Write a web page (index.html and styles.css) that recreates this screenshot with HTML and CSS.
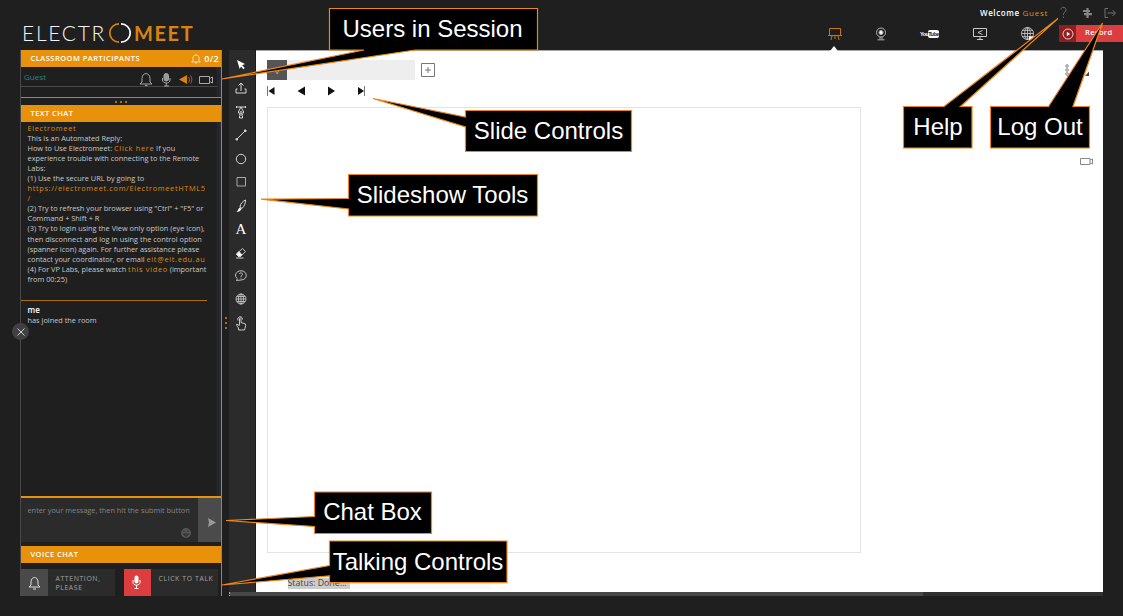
FILE: index.html
```html
<!DOCTYPE html>
<html lang="en">
<head>
<meta charset="utf-8">
<title>Electromeet</title>
<link rel="stylesheet" href="styles.css">
</head>
<body>
<div class="app">
  <header class="top">
    <div class="logo"><span class="logo-light">ELECTR</span><svg class="ring" width="22" height="22" viewBox="0 0 22 22" fill="none" stroke-width="1.7"><path d="M10 1.8A9.2 9.2 0 0 0 10 20.2" stroke="#d98210"/><path d="M12 1.8A9.2 9.2 0 0 1 12 20.2" stroke="#fff"/></svg><span class="logo-bold">MEET</span></div>
    <div class="top-right">
      <div class="account">
        <span class="welcome">Welcome <b>Guest</b></span>
        <svg width="80" height="24" viewBox="0 0 80 24" fill="none" stroke="#707070"><path d="M14 9.500C14 6.500 19 6.500 19 9.800C19 12.200 16.400 12 16.400 15M16.400 16.600V18"/><path d="M36 11H43M37 14.200H45M40.500 8V18" stroke="#858585" stroke-width="2.200"/><path d="M61 8.500H58V17.500H61M60.500 13H68M65.500 10L68.500 13L65.500 16"/></svg>
      </div>
      <nav class="modes">
        <svg width="16" height="14" viewBox="0 0 16 14" fill="none" stroke="#c87808"><path d="M2.500 1.500H13.500V8.500H2.500ZM1 8.500H15M5 9L4 13M11 9L12 13M8 9V12"/></svg>
        <svg width="12" height="14" viewBox="0 0 12 14" fill="none" stroke="#b5b5b5"><circle cx="6" cy="5.500" r="4.500"/><circle cx="6" cy="5.500" r="2" fill="#fff"/><path d="M5 10V12M7 10V12M2.500 12.800H9.500"/></svg>
        <div class="youtube"><span>You</span><b>Tube</b></div>
        <svg width="14" height="14" viewBox="0 0 14 14" fill="none" stroke="#c9c9c9"><path d="M.500 1.500H13.500V9.500H.500ZM7 10V12M4 12.500H10"/><path d="M9.500 3.500L5 5.500L9.500 7.500"/></svg>
        <svg width="14" height="14" viewBox="0 0 14 14" fill="none" stroke="#d5d5d5" stroke-width=".8"><circle cx="6.500" cy="6.500" r="6"/><ellipse cx="6.500" cy="6.500" rx="2.800" ry="6"/><path d="M.500 6.500H12.500M1.500 3.300H11.500M1.500 9.700H11.500M6.500 .500V12.500"/><path d="M8 9.500H13V11L11 13H8Z" fill="#fff" stroke="none"/></svg>
        <div class="record"><span class="record-icon"><svg width="12" height="12" viewBox="0 0 12 12" fill="none" stroke="#f0c8c8"><circle cx="6" cy="6" r="5"/><path d="M4.800 3.800L8.200 6L4.800 8.200Z" fill="#fff" stroke="none"/></svg></span><span class="record-label">Record</span></div>
      </nav>
    </div>
  </header>

  <main class="main">
    <aside class="side">
      <div class="bar"><span class="wide">CLASSROOM PARTICIPANTS</span><span class="count"><svg width="10" height="10" viewBox="0 0 15 15" fill="none" stroke="#fff"><path d="M1 12H14L12 10V6C12 0 3 0 3 6V10ZM6 13.500H9"/></svg>0/2</span></div>
      <div class="people">
        <div class="person"><span>Guest</span>
          <svg width="78" height="16" viewBox="0 0 78 16" fill="none" stroke="#a8a8a8"><path d="M1 12H13L11 10V6.500C11 0 3 0 3 6.500V10ZM6 13.500H8.500"/><rect x="25" y="1.500" width="4.500" height="7.500" rx="2.200" fill="#999"/><path d="M23.500 6V8C23.500 12 31 12 31 8V6M27.300 11V14M25 14H30"/><path d="M40 7.500L48 3V12Z" fill="#dc8206" stroke="none"/><path d="M49.500 5C51 6.500 51 9 49.500 10.500M51.500 3.500C53.300 6 53.300 9 51.500 11.500" stroke="#a96506"/><path d="M60.500 4.500H70.500V11.500H60.500ZM70.500 6.500L73.500 5V11L70.500 9.500"/></svg>
        </div>
      </div>
      <div class="dots"><i></i><i></i><i></i></div>
      <div class="bar"><span class="mid">TEXT CHAT</span></div>
      <div class="chat">
        <div class="message">
          <span class="ln"><a>Electromeet</a></span>
          <span class="ln">This is an Automated Reply:</span>
          <span class="ln">How to Use Electromeet: <a>Click here</a> If you</span>
          <span class="ln">experience trouble with connecting to the Remote</span>
          <span class="ln">Labs:</span>
          <span class="ln">(1) Use the secure URL by going to</span>
          <span class="ln"><a>https://electromeet.com/ElectromeetHTML5</a></span>
          <span class="ln"><a>/</a></span>
          <span class="ln">(2) Try to refresh your browser using "Ctrl" + "F5" or</span>
          <span class="ln">Command + Shift + R</span>
          <span class="ln">(3) Try to login using the View only option (eye icon),</span>
          <span class="ln">then disconnect and log in using the control option</span>
          <span class="ln">(spanner icon) again. For further assistance please</span>
          <span class="ln">contact your coordinator, or email <a>eit@eit.edu.au</a></span>
          <span class="ln">(4) For VP Labs, please watch <a>this video</a> (important</span>
          <span class="ln">from 00:25)</span>
        </div>
        <div class="message joined"><span class="ln"><b>me</b></span><span class="ln">has joined the room</span></div>
      </div>
      <div class="compose">
        <div class="entry"><span>enter your message, then hit the submit button</span><svg width="10" height="10" viewBox="0 0 10 10"><circle cx="5" cy="5" r="5" fill="#555"/><path d="M3 2.500V4M7 2.500V4M2.500 6C3.500 8.500 6.500 8.500 7.500 6Z" stroke="#292929" fill="none"/></svg></div>
        <div class="send"><svg width="8" height="9" viewBox="0 0 8 9"><path d="M0 0L8 4.500L0 9L1 4.500Z" fill="#999"/></svg></div>
      </div>
      <div class="bar voice"><span class="mid">VOICE CHAT</span></div>
      <div class="talk">
        <div class="tile"><svg width="13" height="14" viewBox="0 0 13 14" fill="none" stroke="#ddd"><path d="M1 11H12L10 9V6C10 0 3 0 3 6V9ZM5 13H8"/></svg></div><div class="talk-label first">ATTENTION,<br>PLEASE</div>
        <div class="tile red"><svg width="9" height="15" viewBox="0 0 9 15" fill="none" stroke="#fff"><rect x="2.500" y=".500" width="4" height="8" rx="2" fill="#fff" stroke="none"/><path d="M1 5V7.500C1 11 8 11 8 7.500V5M4.500 10V13.500M2.500 13.500H6.500"/></svg></div><div class="talk-label">CLICK TO TALK</div>
      </div>
      <span class="rail rail-people"></span>
      <span class="rail rail-chat"></span>
      <span class="close"><svg width="8" height="8" viewBox="0 0 8 8" stroke="#ccc"><path d="M.500 .500L7.500 7.500M7.500 .500L.500 7.500"/></svg></span>
    </aside>
    <div class="gutter"><i></i><i></i><i></i></div>

    <section class="work">
      <div class="work-row">
        <div class="tools">
          <svg viewBox="0 0 12 12"><path d="M2 1L10 5L7.200 6.200L9.700 9L8.300 10.300L6 7.500L4.700 10Z" fill="#fff" stroke="none"/></svg>
          <svg viewBox="0 0 12 12"><path d="M6 9V1.500M3.500 3.500L6 1L8.500 3.500M2.500 7H1V11H11V7H9.500"/></svg>
          <svg viewBox="0 0 12 12"><path d="M2 1H10M6 1L3.300 6L5 9H7L8.700 6ZM4.500 9.500V12H7.500V9.500"/><circle cx="6" cy="6.500" r="1"/><path d="M1.500 0V2M10.500 0V2"/></svg>
          <svg viewBox="0 0 12 12"><path d="M1.500 10.500L10.500 1.500M1 9.700H2.500V11H1ZM9.500 1H11V2.500H9.500Z"/></svg>
          <svg viewBox="0 0 12 12"><circle cx="6" cy="6" r="4.700"/></svg>
          <svg viewBox="0 0 12 12"><path d="M2 1.500H10.500V10H2Z" stroke="#aaa"/></svg>
          <svg viewBox="0 0 12 12"><path d="M5 7C5 4 8 1 10.500 0C10.500 3 9.500 6 7 8.500M5 7L7 8.500"/><path d="M4.500 7.500L6.500 9C5.500 11 4 12 1.500 12C3 11 3 9 4.500 7.500Z" fill="#fff" stroke="none"/></svg>
          <span class="letter">A</span>
          <svg viewBox="0 0 12 12"><path d="M1.500 7L7.500 1.500L10.500 4.500L5.500 9.500H3.500ZM1 11H8.500" stroke-width=".9"/><path d="M1.500 7L4 4.500L7 8L5 9.500H3.500Z" fill="#fff"/></svg>
          <svg viewBox="0 0 12 12"><path d="M1.500 10.500L2.500 8.800C-1.500 6 1 .800 6 .800C13 .800 13 10 6 10C4.500 10 3.500 10.500 1.500 10.500M4.500 4C4.500 2.500 7.500 2.500 7.500 4.200C7.500 5.500 6 5 6 7M6 7.700V8.500" stroke-width=".85"/></svg>
          <svg viewBox="0 0 12 12"><g stroke-width=".75"><circle cx="6" cy="6" r="5"/><ellipse cx="6" cy="6" rx="2.500" ry="5"/><path d="M1 6H11M1.800 3.500H10.200M1.800 8.500H10.200M6 1V11"/></g></svg>
          <svg viewBox="0 0 12 12"><path d="M4 8.500L1.800 7C1 7.500 2 9 3.500 11V13H9.500C10 10.500 11 9.500 10.500 7L6 5.500V1.500C6 .500 4.500 .500 4.500 1.500V8.500M3 3.500C1.500-.500 7.500-2 7.500 2.500" stroke-width=".9"/></svg>
        </div>
        <div class="board">
          <div class="tabs"><div class="tab-active">˅</div><div class="tab-track"></div><div class="add"><svg width="14" height="14" viewBox="0 0 14 14" fill="none" stroke="#777"><path d="M.500 .500H13.500V13.500H.500ZM4 7H10M7 4V10"/></svg></div></div>
          <div class="slides"><svg width="99" height="12" viewBox="0 0 99 12" fill="#111"><path d="M1.500 6L7.500 2V10ZM30.500 6L38 1.500V10.500ZM61 1.500L68 6L61 10.500ZM91 2L97 6L91 10Z"/><path d="M.500 1V11M97.500 1V11" stroke="#777"/></svg></div>
          <div class="canvas"></div>
          <div class="status"><span>Status: Done...</span></div>
          <svg class="extras" width="40" height="110" viewBox="0 0 40 110" fill="none" stroke="#888"><circle cx="4" cy="3" r="1.300"/><circle cx="4" cy="7" r="1.300"/><circle cx="4" cy="11" r="1.300"/><path d="M22 13H26V8.500Z" fill="#444" stroke="none"/><path d="M17.500 95.500H27V101.500H17.500ZM27 97L29.500 96V101L27 100"/></svg>
          <span class="pointer"></span>
        </div>
      </div>
      <div class="scroll"><div></div></div>
    </section>
  </main>

  <svg class="callouts" width="1123" height="616" viewBox="0 0 1123 616">
    <g fill="#000" stroke="#ee861a" stroke-width="1.200">
      <path d="M329.500 8.500H537.500V50H415L222 79L364 50H329.500Z"/>
      <path d="M465.500 110.500H631.500V151.500H465.500V127L373 98.500L465.500 117Z"/>
      <path d="M348.500 174.500H537.500V216H348.500V209L261 199.200L348.500 198.500Z"/>
      <path d="M314.500 492H431.500V533.500H314.500V526.500L226 520.500L314.500 516.500Z"/>
      <path d="M329.500 541H507V582.700H329.500V575.800L222 585L329.500 565.500Z"/>
      <path d="M903.500 106.500H944L1058 18.500L960.500 106.500H972V148H903.500Z"/>
      <path d="M990.500 106.500H1048.500L1102.500 23L1073 106.500H1089.500V148H990.500Z"/>
    </g>
    <g class="callout-text">
      <text x="432.500" y="37">Users in Session</text>
      <text x="548.500" y="139">Slide Controls</text>
      <text x="442.500" y="203">Slideshow Tools</text>
      <text x="372.500" y="520">Chat Box</text>
      <text x="418" y="570">Talking Controls</text>
      <text x="938" y="135">Help</text>
      <text x="1040" y="135">Log Out</text>
    </g>
  </svg>
</div>
</body>
</html>
```
FILE: styles.css
```css
* { box-sizing: border-box; }
body { margin: 0; background: #1f1f1f; font-family: "Open Sans", sans-serif; color: #c8c8c8; overflow: hidden; }
svg { display: block; flex: none; }
.app { position: relative; width: 1123px; height: 616px; }
.top { height: 50px; display: flex; justify-content: space-between; }
.logo { display: flex; align-items: center; height: 24px; margin: 21px 0 0 22px; font-family: Lato, sans-serif; font-size: 21px; line-height: 24px; white-space: nowrap; }
.logo-light { font-weight: 300; color: #f4f4f4; width: 87px; letter-spacing: 1.7px; }
.logo-bold { font-weight: 700; color: #d98210; margin-left: 3px; font-size: 20px; letter-spacing: 1.6px; }
.top-right { width: 300px; }
.account { height: 25px; display: flex; justify-content: flex-end; }
.welcome { width: 86px; margin: 7px -21px 0 0; font-size: 8px; line-height: 11px; font-weight: 600; color: #fff; letter-spacing: .6px; white-space: nowrap; }
.welcome b { color: #e38d1c; font-weight: 400; letter-spacing: .8px; }
.account svg { position: relative; left: 2px; margin-right: -2px; }
.modes { display: flex; align-items: center; height: 17px; }
.modes > svg:nth-child(1) { margin-left: 4px; }
.modes > svg:nth-child(2) { margin-left: 32px; }
.modes > .youtube { margin-left: 33px; }
.modes > svg:nth-child(4) { margin-left: 34px; }
.modes > svg:nth-child(5) { margin-left: 34px; }
.youtube { width: 19px; height: 8px; display: flex; font: bold 5.5px/8px "Liberation Sans", sans-serif; letter-spacing: -.5px; color: #fff; }
.youtube span { width: 8px; }
.youtube b { width: 11px; background: #fff; color: #222; border-radius: 2px; text-align: center; }
.record { display: flex; width: 64px; height: 17px; margin-left: auto; background: #dc3d3e; color: #fff; font-size: 7.6px; line-height: 14px; font-weight: 600; letter-spacing: .3px; }
.record-icon { width: 17px; background: #8f1e20; display: grid; place-items: center; }
.record-label { padding-left: 9px; }
.main { display: flex; height: 546px; padding-left: 20px; }
.side { position: relative; width: 202px; height: 546px; border-left: 1px solid #494949; border-right: 1px solid #c87d0e; display: flex; flex-direction: column; }
.bar { height: 17px; flex: none; background: #e8920b; color: #fff; display: flex; justify-content: space-between; align-items: center; padding: 0 2px 1px 9.5px; font-size: 7.5px; font-weight: 600; letter-spacing: .3px; white-space: nowrap; }
.bar .wide { letter-spacing: .47px; }
.bar .mid { letter-spacing: .45px; }
.count { display: flex; gap: 3px; align-items: center; font-size: 9px; padding-top: 1px; }
.people { height: 31px; border-bottom: 1px solid #c77c10; }
.person { height: 20px; border-bottom: 1px solid #484848; display: flex; justify-content: space-between; padding: 0 4.5px 0 3px; font-size: 8px; line-height: 19px; color: #1d8b83; letter-spacing: .05px; }
.person svg { margin-top: 5px; }
.dots { height: 7px; display: flex; justify-content: center; align-items: center; gap: 3px; flex: none; }
.dots i, .gutter i { width: 2px; height: 2px; background: #e38a0d; border-radius: 1px; }
.chat { height: 374px; flex: none; padding: 1px 0 0 6.5px; font-size: 7.37px; line-height: 10.06px; }
.ln { display: block; white-space: nowrap; height: 10.06px; }
.chat a { color: #df8a12; letter-spacing: .67px; }
.joined { width: 186px; margin: 16px 0 0 -6.5px; border-top: 1px solid #ae6c0c; padding: 4px 0 0 6.5px; }
.joined b { color: #fff; font-weight: 600; font-size: 8px; }
.compose { display: flex; height: 46px; flex: none; border-top: 2px solid #e8920b; background: #2b2b2b; }
.entry { width: 177px; padding: 7px 7px 0 6.5px; font-size: 7.35px; line-height: 11px; color: #858585; white-space: nowrap; }
.entry svg { margin: 12px 0 0 153px; }
.send { flex: 1; background: #4b4b4b; display: grid; place-items: center; padding: 4px 0 0 4px; }
.voice { margin-top: 4px; }
.talk { display: flex; margin-top: 6px; height: 27px; flex: none; }
.tile { width: 27px; flex: none; background: #4a4a4a; display: grid; place-items: center; }
.tile:first-child { padding-right: 1px; }
.tile.red { background: #dc3d3e; padding-right: 3px; }
.talk-label { width: 67px; flex: none; background: #2b2b2b; padding: 5px 0 0 7.5px; color: #a2a2a2; font-size: 6.9px; line-height: 9px; letter-spacing: .6px; white-space: nowrap; }
.talk-label.first { margin-right: 9px; }
.rail { position: absolute; right: 0; width: 4px; border: solid #292a38; border-width: 0 2px 0 1px; background: #1f1f29; }
.rail-people { top: 17px; height: 30px; }
.rail-chat { top: 72px; height: 374px; }
.close { position: absolute; left: -9px; top: 273px; width: 17px; height: 17px; border-radius: 50%; background: #414141; display: grid; place-items: center; }
.gutter { width: 7px; display: flex; flex-direction: column; align-items: center; gap: 3px; padding-top: 267px; }
.work { width: 874px; }
.work-row { display: flex; height: 542px; }
.tools { width: 27px; background: #2b2b2b; border-right: 1px solid #1b1b1b; padding-top: 9px; display: flex; flex-direction: column; align-items: center; gap: 11.45px; }
.tools svg { width: 12px; height: 12px; fill: none; stroke: #d8d8d8; stroke-width: 1; overflow: visible; margin-right: 2px; }
.letter { height: 12px; font: 15px/13px "Liberation Serif", serif; color: #fff; margin-right: 2px; }
.board { position: relative; width: 847px; background: #fff; border-top: 1px solid #aaa; padding: 9px 0 0 11px; }
.tabs { display: flex; height: 20px; }
.tab-active { width: 20px; background: #555; color: #bbb; text-align: center; font-size: 8px; line-height: 23px; }
.tab-track { width: 128px; background: #eee; }
.add { margin: 3px 0 0 6px; }
.slides { height: 27px; padding-top: 5px; }
.canvas { width: 594px; height: 446px; border: 1px solid #e3e3e3; }
.status { margin: 25px 0 0 20.5px; width: 203px; height: 11px; background: #f8f8f8; font-size: 8.8px; line-height: 11px; color: #454545; }
.status span { display: block; width: 62px; background: #ccc; white-space: nowrap; }
.extras { position: absolute; left: 807px; top: 12px; }
.pointer { position: absolute; left: 574px; top: -5px; border: 4px solid transparent; border-top: 0; border-bottom: 5px solid #fff; }
.scroll { height: 4px; background: #303030; }
.scroll div { height: 4px; width: 694px; background: #484848; border-left: 1px dotted #aaa; }
.callouts { position: absolute; inset: 0; }
.callout-text { fill: #fff; font: 24px "Liberation Sans", sans-serif; text-anchor: middle; }
```
